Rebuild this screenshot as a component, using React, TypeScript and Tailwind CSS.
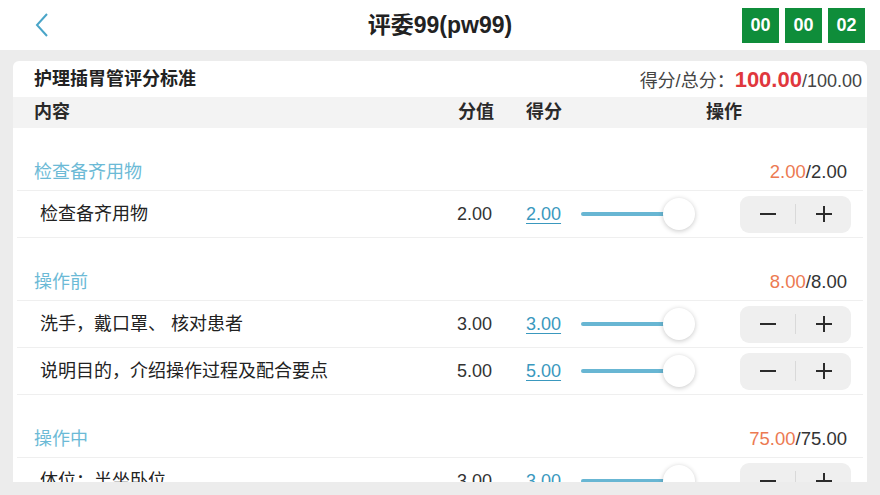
import React from "react";

type Item = { name: string; value: string; score: string };
type Section = { title: string; got: string; total: string; items: Item[] };

const sections: Section[] = [
    {
        title: "检查备齐用物",
        got: "2.00",
        total: "2.00",
        items: [{ name: "检查备齐用物", value: "2.00", score: "2.00" }],
    },
    {
        title: "操作前",
        got: "8.00",
        total: "8.00",
        items: [
            { name: "洗手，戴口罩、 核对患者", value: "3.00", score: "3.00" },
            { name: "说明目的，介绍操作过程及配合要点", value: "5.00", score: "5.00" },
        ],
    },
    {
        title: "操作中",
        got: "75.00",
        total: "75.00",
        items: [{ name: "体位：半坐卧位", value: "3.00", score: "3.00" }],
    },
];

const font = "font-['Helvetica_Neue','Liberation_Sans','Noto_Sans_CJK_SC',sans-serif]";

const Stepper = () => (
    <div className="w-[111px] h-[37px] bg-[#efefef] rounded-[9px] flex items-center">
        <div className="flex-1 flex justify-center">
            <svg width="18" height="18" viewBox="0 0 18 18">
                <line x1="1" y1="9" x2="17" y2="9" stroke="#2b2b2b" strokeWidth="2" />
            </svg>
        </div>
        <div className="w-px h-[20px] bg-[#d9d9d9]" />
        <div className="flex-1 flex justify-center">
            <svg width="18" height="18" viewBox="0 0 18 18">
                <line x1="1" y1="9" x2="17" y2="9" stroke="#2b2b2b" strokeWidth="2" />
                <line x1="9" y1="1" x2="9" y2="17" stroke="#2b2b2b" strokeWidth="2" />
            </svg>
        </div>
    </div>
);

const Slider = () => (
    <div className="w-[159px] flex items-center">
        <div className="w-[85px] h-[4px] bg-[#68b6d3] rounded-full" />
        <div className="w-[32px] h-[32px] -ml-[3px] rounded-full bg-white shadow-[0_1px_5px_rgba(0,0,0,0.22)]" />
    </div>
);

const Row = ({ item }: { item: Item }) => (
    <div className="h-[47px] mx-[4px] border-b border-[#efefef] flex items-center pl-[23px] pr-[12px] text-[18px]">
        <div className="flex-1 text-[#222]">{item.name}</div>
        <div className="w-[69px] text-[#333]">{item.value}</div>
        <div className="w-[55px] text-[#3a98be] underline underline-offset-[3px]">{item.score}</div>
        <Slider />
        <Stepper />
    </div>
);

export default function App() {
    return (
        <div className={`w-[880px] h-[495px] bg-[#ececec] flex flex-col overflow-hidden ${font}`}>
            <div className="h-[50px] bg-white grid grid-cols-[1fr_auto_1fr] items-center shrink-0">
                <div className="pl-[34px]">
                    <svg width="16" height="26" viewBox="0 0 16 26">
                        <polyline points="13,2 3,13 13,24" fill="none" stroke="#4aa5c8" strokeWidth="2" />
                    </svg>
                </div>
                <div className="text-[23px] font-bold text-[#222]">评委99(pw99)</div>
                <div className="flex justify-end gap-[6px] pr-[15px]">
                    {["00", "00", "02"].map((t, i) => (
                        <div
                            key={i}
                            className="w-[37px] h-[35px] bg-[#0f8d3a] text-white font-bold text-[18px] flex items-center justify-center"
                        >
                            {t}
                        </div>
                    ))}
                </div>
            </div>

            <div className="px-[13px] pt-[11px] pb-[13px] flex-1 overflow-hidden">
                <div className="h-full bg-white rounded-t-[6px] overflow-hidden">
                    <div className="h-[36px] flex items-center justify-between pl-[21px] pr-[5px]">
                        <div className="text-[18px] font-semibold text-[#222]">护理插胃管评分标准</div>
                        <div className="text-[18px] text-[#444]">
                            得分/总分：<span className="text-[#e0373d] text-[22px] font-bold">100.00</span>/100.00
                        </div>
                    </div>
                    <div className="h-[31px] bg-[#f3f3f3] flex items-center pl-[21px] text-[18px] font-semibold text-[#2a2a2a]">
                        <div className="flex-1">内容</div>
                        <div className="w-[68px]">分值</div>
                        <div className="w-[55px]">得分</div>
                        <div className="w-[286px] text-center">操作</div>
                    </div>

                    {sections.map((s, i) => (
                        <div key={i}>
                            <div className="h-[63px] mx-[4px] border-b border-[#efefef] flex items-end justify-between pl-[17px] pr-[16px] pb-[4px] text-[18.5px]">
                                <div className="text-[18px] text-[#6cbad6]">{s.title}</div>
                                <div className="text-[#333]">
                                    <span className="text-[#ec7a52]">{s.got}</span>/{s.total}
                                </div>
                            </div>
                            {s.items.map((it, j) => (
                                <Row key={j} item={it} />
                            ))}
                        </div>
                    ))}
                </div>
            </div>
        </div>
    );
}
